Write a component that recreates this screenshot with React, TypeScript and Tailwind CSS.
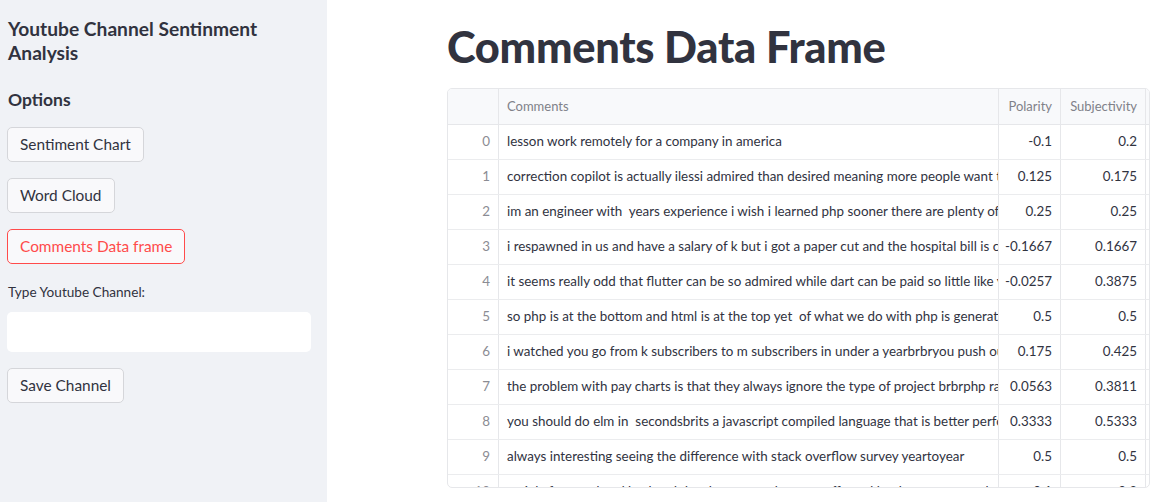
const rows = [
  ["lesson work remotely for a company in america", "-0.1", "0.2"],
  ["correction copilot is actually ilessi admired than desired meaning more people want to use it than actually do", "0.125", "0.175"],
  ["im an engineer with  years experience i wish i learned php sooner there are plenty of php jobs everywhere", "0.25", "0.25"],
  ["i respawned in us and have a salary of k but i got a paper cut and the hospital bill is costing me more", "-0.1667", "0.1667"],
  ["it seems really odd that flutter can be so admired while dart can be paid so little like you said", "-0.0257", "0.3875"],
  ["so php is at the bottom and html is at the top yet  of what we do with php is generating html", "0.5", "0.5"],
  ["i watched you go from k subscribers to m subscribers in under a yearbrbryou push out great content", "0.175", "0.425"],
  ["the problem with pay charts is that they always ignore the type of project brbrphp ranks low because", "0.0563", "0.3811"],
  ["you should do elm in  secondsbrits a javascript compiled language that is better performing and safer", "0.3333", "0.5333"],
  ["always interesting seeing the difference with stack overflow survey yeartoyear", "0.5", "0.5"],
  ["mainly frontend and backend developers are the most affected by the current market in my experience", "0.1", "0.3"],
];

const font = { fontFamily: '"Lato", "Liberation Sans", sans-serif' };

const SideButton = ({ label, active }: { label: string; active?: boolean }) => (
  <button
    className={
      active
        ? "h-[35px] px-[12px] rounded-[5px] border border-[#ff4b4b] bg-[#f9f9fb] text-[#ff4b4b] text-[15.4px] w-fit"
        : "h-[35px] px-[12px] rounded-[5px] border border-[#d5d6da] bg-[#f9f9fb] text-[#31333f] text-[15.4px] w-fit"
    }
  >
    {label}
  </button>
);

export default function App() {
  return (
    <div className="flex w-[1168px] h-[502px] overflow-hidden bg-white text-[#31333f]" style={font}>
      <aside className="w-[327px] shrink-0 bg-[#f0f2f6] px-[7px] pt-[17px]">
        <h2 className="text-[19.2px] font-bold leading-[24px] pl-[1px]">
          Youtube Channel Sentinment Analysis
        </h2>
        <h3 className="text-[17.5px] font-bold mt-[23px] leading-[24px] pl-[1px]">Options</h3>
        <div className="flex flex-col gap-[16px] mt-[15px]">
          <SideButton label="Sentiment Chart" />
          <SideButton label="Word Cloud" />
          <SideButton label="Comments Data frame" active />
        </div>
        <p className="text-[13.6px] mt-[19px] leading-[18px] pl-[1px]">Type Youtube Channel:</p>
        <div className="mt-[11px] h-[40px] w-[304px] rounded-[5px] bg-white" />
        <div className="mt-[16px]">
          <SideButton label="Save Channel" />
        </div>
      </aside>

      <main className="flex-1 pl-[120px] pt-[18px]">
        <h1 className="text-[43.4px] font-black leading-[56px] tracking-[-0.3px]">Comments Data Frame</h1>
        <div className="mt-[14px] w-[703px] h-[400px] overflow-hidden rounded-[5px] border border-[#e6e7ea]">
          <div className="grid grid-cols-[51px_500px_62px_85px_1fr] h-[36px] bg-[#f8f9fb] border-b border-[#e6e7ea] text-[13px] text-[#808189]">
            <div className="border-r border-[#e6e7ea]" />
            <div className="border-r border-[#e6e7ea] flex items-center px-[8px]">Comments</div>
            <div className="border-r border-[#e6e7ea] flex items-center justify-end px-[8px]">Polarity</div>
            <div className="border-r border-[#e6e7ea] flex items-center justify-end px-[8px]">Subjectivity</div>
            <div />
          </div>
          {rows.map((r, i) => (
            <div
              key={i}
              className="grid grid-cols-[51px_500px_62px_85px_1fr] h-[35px] border-b border-[#ebecee] text-[13.4px]"
            >
              <div className="border-r border-[#e6e7ea] flex items-center justify-end px-[8px] pb-[2px] text-[#8b8c93]">{i}</div>
              <div className="border-r border-[#e6e7ea] flex items-center pl-[8px] pb-[2px] whitespace-pre overflow-hidden">{r[0]}</div>
              <div className="border-r border-[#e6e7ea] flex items-center justify-end px-[8px] pb-[2px]">{r[1]}</div>
              <div className="border-r border-[#e6e7ea] flex items-center justify-end px-[8px] pb-[2px]">{r[2]}</div>
              <div />
            </div>
          ))}
        </div>
      </main>
    </div>
  );
}
